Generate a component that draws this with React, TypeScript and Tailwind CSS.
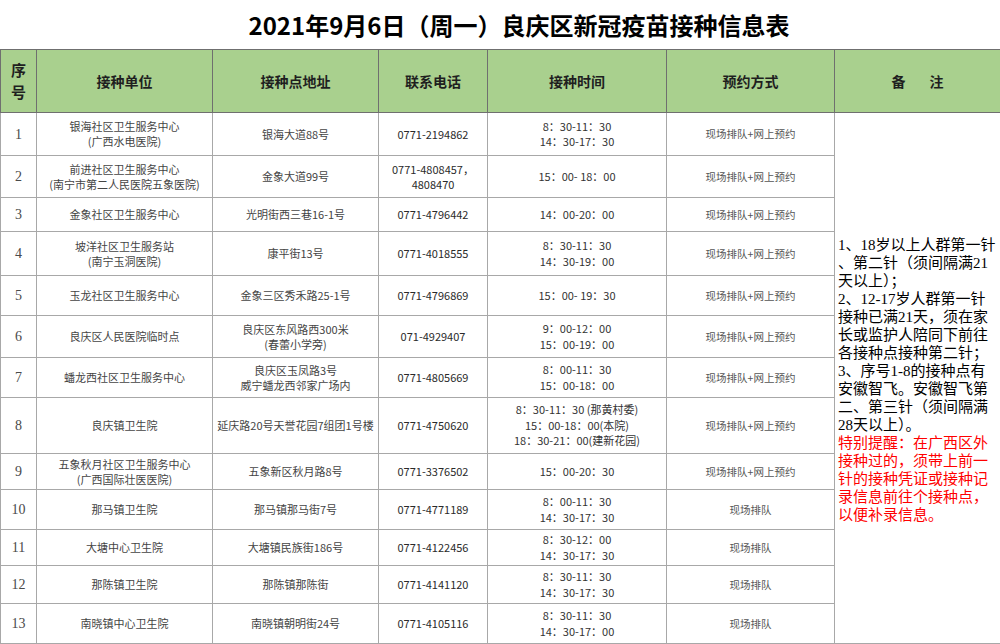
const WAY_FULL = '现场排队+网上预约';
const WAY_SITE = '现场排队';

type Row = {
  n: number;
  h: string;
  unit: string[];
  addr: string[];
  tel: string[];
  time: string[];
  way: string;
};

const rows: Row[] = [
  { n: 1, h: 'h-[43px]', unit: ['银海社区卫生服务中心', '(广西水电医院)'], addr: ['银海大道88号'], tel: ['0771-2194862'], time: ['8：30-11：30', '14：30-17：30'], way: WAY_FULL },
  { n: 2, h: 'h-[42px]', unit: ['前进社区卫生服务中心', '(南宁市第二人民医院五象医院)'], addr: ['金象大道99号'], tel: ['0771-4808457，', '4808470'], time: ['15：00- 18：00'], way: WAY_FULL },
  { n: 3, h: 'h-[34px]', unit: ['金象社区卫生服务中心'], addr: ['光明街西三巷16-1号'], tel: ['0771-4796442'], time: ['14：00-20：00'], way: WAY_FULL },
  { n: 4, h: 'h-[44px]', unit: ['坡洋社区卫生服务站', '(南宁玉洞医院)'], addr: ['康平街13号'], tel: ['0771-4018555'], time: ['8：30-11：30', '14：30-19：00'], way: WAY_FULL },
  { n: 5, h: 'h-[40px]', unit: ['玉龙社区卫生服务中心'], addr: ['金象三区秀禾路25-1号'], tel: ['0771-4796869'], time: ['15：00- 19：30'], way: WAY_FULL },
  { n: 6, h: 'h-[42px]', unit: ['良庆区人民医院临时点'], addr: ['良庆区东风路西300米', '(春蕾小学旁)'], tel: ['071-4929407'], time: ['9：00-12：00', '15：00-19：00'], way: WAY_FULL },
  { n: 7, h: 'h-[40px]', unit: ['蟠龙西社区卫生服务中心'], addr: ['良庆区玉凤路3号', '威宁蟠龙西邻家广场内'], tel: ['0771-4805669'], time: ['8：00-11：30', '15：00-18：00'], way: WAY_FULL },
  { n: 8, h: 'h-[56px]', unit: ['良庆镇卫生院'], addr: ['延庆路20号天誉花园7组团1号楼'], tel: ['0771-4750620'], time: ['8：30-11：30 (那黄村委)', '15：00-18：00(本院)', '18：30-21：00(建新花园)'], way: WAY_FULL },
  { n: 9, h: 'h-[36px]', unit: ['五象秋月社区卫生服务中心', '(广西国际壮医医院)'], addr: ['五象新区秋月路8号'], tel: ['0771-3376502'], time: ['15：00-20：30'], way: WAY_FULL },
  { n: 10, h: 'h-[40px]', unit: ['那马镇卫生院'], addr: ['那马镇那马街7号'], tel: ['0771-4771189'], time: ['8：00-11：30', '14：30-17：30'], way: WAY_SITE },
  { n: 11, h: 'h-[36px]', unit: ['大塘中心卫生院'], addr: ['大塘镇民族街186号'], tel: ['0771-4122456'], time: ['8：30-12：00', '14：30-17：30'], way: WAY_SITE },
  { n: 12, h: 'h-[38px]', unit: ['那陈镇卫生院'], addr: ['那陈镇那陈街'], tel: ['0771-4141120'], time: ['8：30-11：30', '14：30-17：30'], way: WAY_SITE },
  { n: 13, h: 'h-[40px]', unit: ['南晓镇中心卫生院'], addr: ['南晓镇朝明街24号'], tel: ['0771-4105116'], time: ['8：30-11：30', '14：30-17：00'], way: WAY_SITE },
];

const notes = [
  '1、18岁以上人群第一针',
  '、第二针（须间隔满21',
  '天以上）；',
  '2、12-17岁人群第一针',
  '接种已满21天，须在家',
  '长或监护人陪同下前往',
  '各接种点接种第二针；',
  '3、序号1-8的接种点有',
  '安徽智飞。安徽智飞第',
  '二、第三针（须间隔满',
  '28天以上）。',
];

const warning = [
  '特别提醒：在广西区外',
  '接种过的，须带上前一',
  '针的接种凭证或接种记',
  '录信息前往个接种点，',
  '以便补录信息。',
];

function Lines({ items }: { items: string[] }) {
  return (
    <>
      {items.map((t) => (
        <div key={t} className="whitespace-nowrap">{t}</div>
      ))}
    </>
  );
}

export default function App() {
  const th = 'border border-[#6f6f6f] bg-[#a9d08e] text-[14px] font-bold text-[#1f1f1f] text-center align-middle';
  const td = 'border border-[#a8a8a8] text-center align-middle p-0';

  return (
    <div className="w-[1000px] h-[644px] bg-white font-['Noto_Sans_CJK_SC',sans-serif] overflow-hidden">
      {/* Title */}
      <div className="h-[49px] flex items-center justify-center pl-[38px] pt-[1px] text-[24px] font-bold text-black">
        2021年9月6日（周一）良庆区新冠疫苗接种信息表
      </div>

      <table className="w-[1000px] table-fixed border-collapse">
        <colgroup>
          <col className="w-[36px]" />
          <col className="w-[176px]" />
          <col className="w-[166px]" />
          <col className="w-[109px]" />
          <col className="w-[179px]" />
          <col className="w-[168px]" />
          <col className="w-[166px]" />
        </colgroup>
        <thead>
          <tr className="h-[63px]">
            <th className={`${th} leading-[22px] text-[15px]`}>
              序<br />号
            </th>
            <th className={th}>接种单位</th>
            <th className={th}>接种点地址</th>
            <th className={th}>联系电话</th>
            <th className={th}>接种时间</th>
            <th className={th}>预约方式</th>
            <th className={th}>
              备<span className="inline-block w-[24px]" />注
            </th>
          </tr>
        </thead>
        <tbody>
          {rows.map((r, i) => (
            <tr key={r.n} className={r.h}>
              <td className={`${td} font-['Liberation_Serif',serif] text-[14px] text-[#4a4a4a]`}>{r.n}</td>
              <td className={`${td} text-[11px] leading-[15px] text-[#444]`}>
                <Lines items={r.unit} />
              </td>
              <td className={`${td} text-[11px] leading-[15px] text-[#444]`}>
                <Lines items={r.addr} />
              </td>
              <td className={`${td} text-[11px] leading-[15px] text-[#2a2a2a]`}>
                <Lines items={r.tel} />
              </td>
              <td className={`${td} text-[11px] leading-[15.5px] text-[#333]`}>
                <Lines items={r.time} />
              </td>
              <td className={`${td} text-[10.5px] text-[#555]`}>{r.way}</td>
              {i === 0 && (
                <td
                  rowSpan={rows.length}
                  className="border border-[#a8a8a8] align-middle text-left pl-[3px] pt-[4px] font-['Liberation_Serif','Noto_Sans_CJK_SC',serif] text-[15px] leading-[18px] text-black"
                >
                  <Lines items={notes} />
                  <div className="text-[#ff0000]">
                    <Lines items={warning} />
                  </div>
                </td>
              )}
            </tr>
          ))}
        </tbody>
      </table>
    </div>
  );
}
